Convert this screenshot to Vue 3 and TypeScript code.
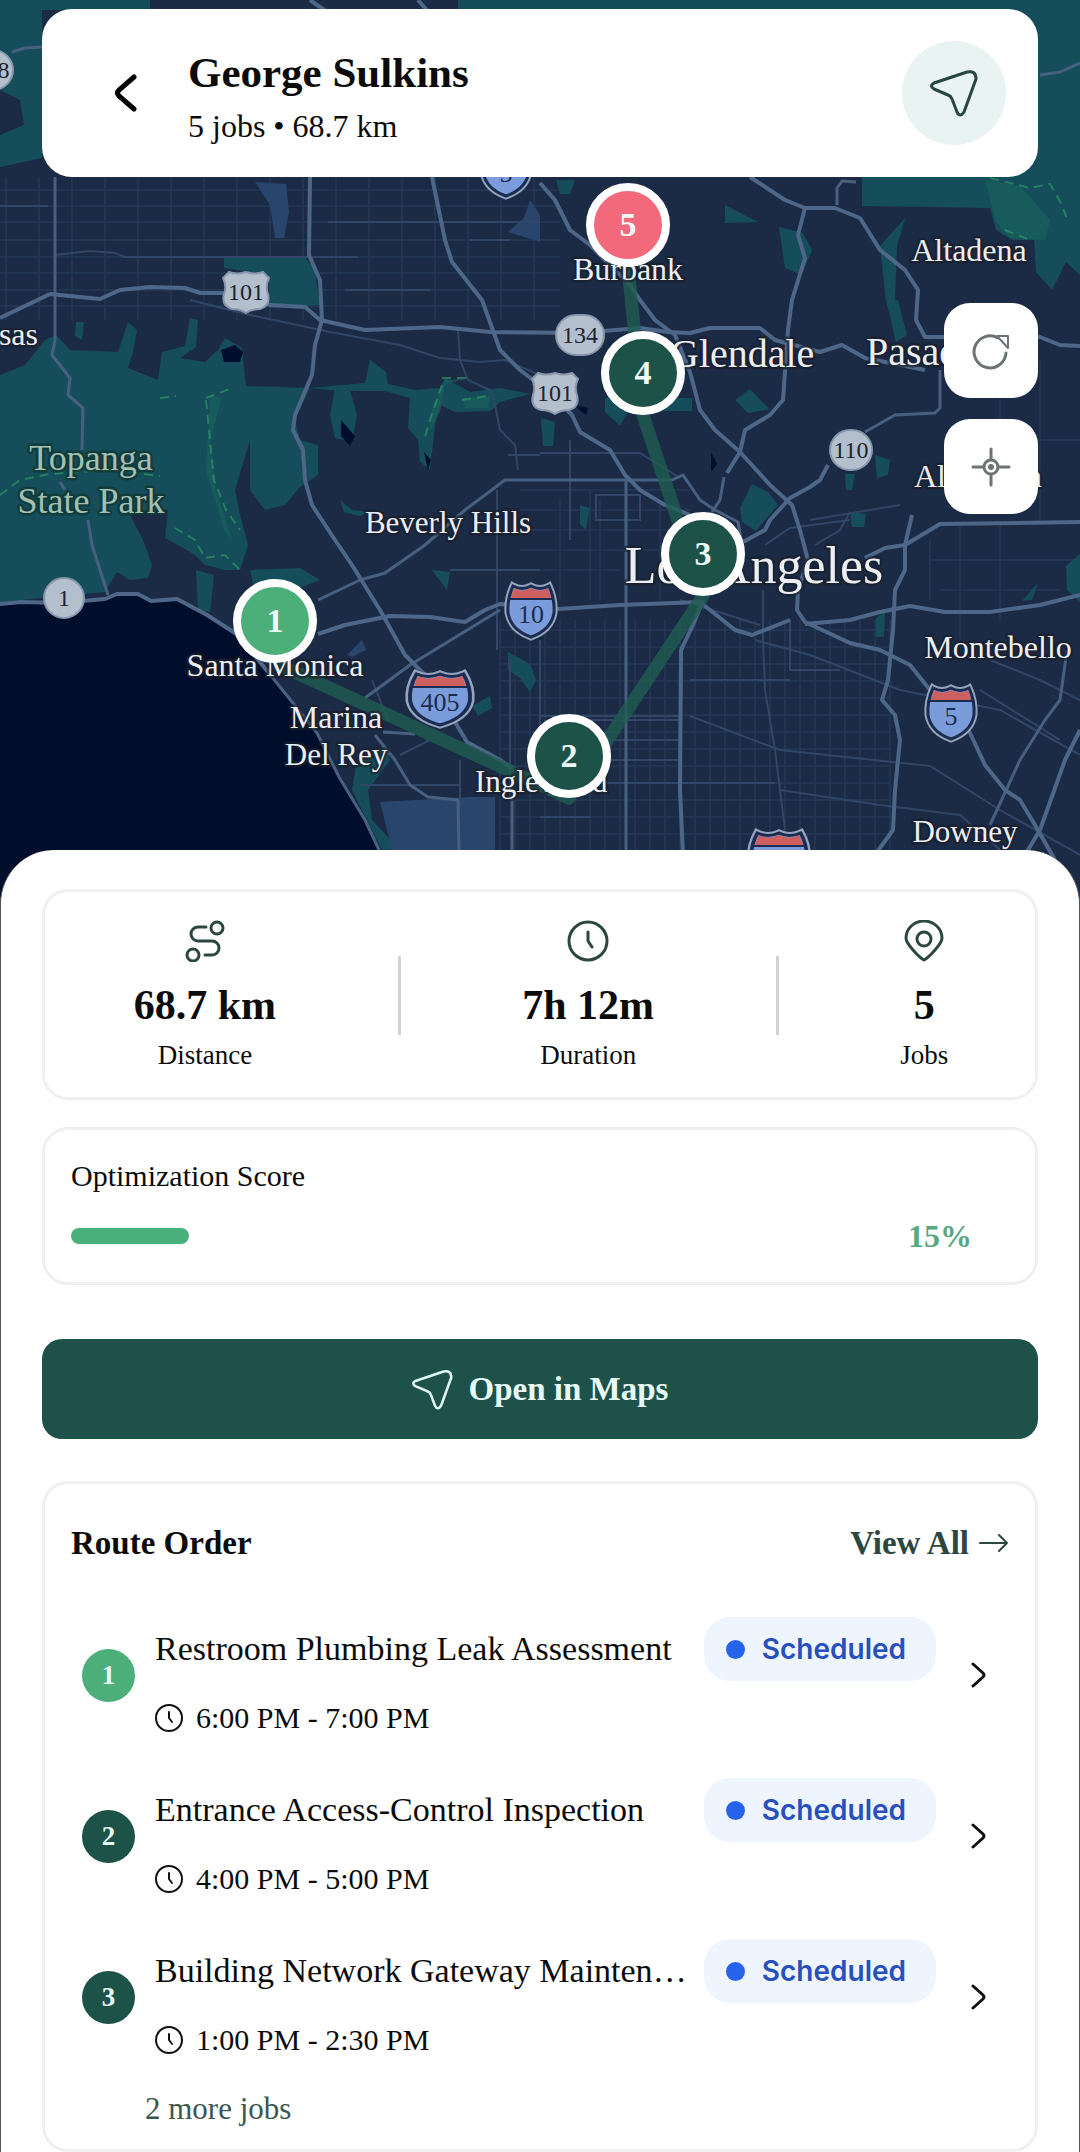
<script setup lang="ts">
import { ref } from 'vue'

interface Stop {
  order: number
  x: number
  y: number
  tone: 'start' | 'mid' | 'end'
}

interface Job {
  order: number
  title: string
  time: string
  status: string
  tone: 'start' | 'mid'
}

interface Label {
  text: string
  x: number
  y: number
  size: number
  anchor?: 'start' | 'middle' | 'end'
  park?: boolean
}

interface Interstate {
  text: string
  x: number
  y: number
  stretch: number
}

const MAP_W = 1080
const MAP_H = 920
const PIN_RADIUS = 42

const stops: Stop[] = [
  { order: 1, x: 275, y: 621, tone: 'start' },
  { order: 2, x: 569, y: 756, tone: 'mid' },
  { order: 3, x: 703, y: 554, tone: 'mid' },
  { order: 4, x: 643, y: 373, tone: 'mid' },
  { order: 5, x: 628, y: 225, tone: 'end' },
]

const jobs = ref<Job[]>([
  { order: 1, title: 'Restroom Plumbing Leak Assessment', time: '6:00 PM - 7:00 PM', status: 'Scheduled', tone: 'start' },
  { order: 2, title: 'Entrance Access-Control Inspection', time: '4:00 PM - 5:00 PM', status: 'Scheduled', tone: 'mid' },
  { order: 3, title: 'Building Network Gateway Maintenance', time: '1:00 PM - 2:30 PM', status: 'Scheduled', tone: 'mid' },
])

const score = 15

const labels: Label[] = [
  { text: 'Burbank', x: 628, y: 280, size: 32, anchor: 'middle' },
  { text: 'Altadena', x: 969, y: 261, size: 32, anchor: 'middle' },
  { text: 'Calabasas', x: 38, y: 345, size: 32, anchor: 'end' },
  { text: 'Glendale', x: 670, y: 367, size: 40 },
  { text: 'Pasadena', x: 866, y: 365, size: 40 },
  { text: 'Alhambra', x: 914, y: 487, size: 32 },
  { text: 'Beverly Hills', x: 448, y: 533, size: 31, anchor: 'middle' },
  { text: 'Los Angeles', x: 754, y: 583, size: 52, anchor: 'middle' },
  { text: 'Santa Monica', x: 275, y: 676, size: 32, anchor: 'middle' },
  { text: 'Marina', x: 336, y: 728, size: 32, anchor: 'middle' },
  { text: 'Del Rey', x: 336, y: 765, size: 31, anchor: 'middle' },
  { text: 'Inglewood', x: 475, y: 792, size: 31 },
  { text: 'Montebello', x: 998, y: 658, size: 32, anchor: 'middle' },
  { text: 'Downey', x: 965, y: 842, size: 31, anchor: 'middle' },
  { text: 'Topanga', x: 91, y: 470, size: 36, anchor: 'middle', park: true },
  { text: 'State Park', x: 91, y: 513, size: 36, anchor: 'middle', park: true },
]

const interstates: Interstate[] = [
  { text: '5', x: 506, y: 170, stretch: 1 },
  { text: '10', x: 531, y: 611, stretch: 1 },
  { text: '405', x: 440, y: 699, stretch: 1.3 },
  { text: '5', x: 951, y: 713, stretch: 1 },
  { text: '710', x: 779, y: 858, stretch: 1.2 },
]

const usRoutes = [
  { x: 246, y: 292 },
  { x: 555, y: 393 },
]

const stateRoutes = [
  { text: '118', x: -8, y: 70, rx: 21 },
  { text: '134', x: 580, y: 335, rx: 24 },
  { text: '110', x: 851, y: 450, rx: 21 },
  { text: '1', x: 64, y: 598, rx: 20 },
]

const greens: string[] = [
  'M0 375L25 365L45 340L56 335L70 350L118 352L128 322L137 330L133 352L128 368L158 380L162 352L185 346L190 318L198 320L196 347L180 358L205 362L218 350L225 338L242 348L246 386L310 388L295 420L300 440L318 445L318 475L300 487L285 505L265 510L250 490L250 440L235 490L240 515L248 545L240 570L225 570L205 565L195 555L178 545L165 538L168 510L150 512L130 515L143 540L152 565L148 578L130 580L117 572L105 592L0 602Z',
  'M224 257H305L315 270L320 305L270 308L268 275L224 268Z',
  'M0 0H150V10H42V158L0 167V135L24 125L20 100L0 90Z',
  'M1020 0H1080V275L1066 262L1052 290L1036 272L1034 240L1012 240L996 230L990 208L862 206V170H1020Z',
  'M458 0H1080V12H458Z',
  'M310 388L365 383L370 360L386 372L388 384L415 390L440 388L445 378L470 392L500 388L530 394L500 402L490 411L455 412L440 405L435 425L430 470L420 462L418 440L408 428L410 398L385 391L340 391Z',
  'M335 388L350 390L357 415L352 442L335 438L330 415Z',
  'M76 322H84L82 340L75 336Z',
  'M605 398H692V411H628L620 426L605 412Z',
  'M735 400L750 389L762 402L770 409L748 413Z',
  'M541 418L555 422L553 446L543 446Z',
  'M740 508L752 484L768 492L778 505L765 520L756 531L742 522Z',
  'M875 455L890 460L888 475L877 478Z',
  'M845 474H855L852 490H846Z',
  'M850 512L866 514L864 527L852 527Z',
  'M886 300H898L907 335L896 342Z',
  'M725 205L758 222L725 223Z',
  'M779 227L803 233L812 250L802 275L785 268Z',
  'M880 246L905 218L897 246L895 300H886Z',
  'M876 618L885 612L884 637L876 637Z',
  'M1022 601L1038 583L1032 600Z',
  'M1066 566L1080 554V602L1067 590Z',
  'M508 652L530 664L536 680L530 692L520 678L508 670Z',
  'M472 706L490 696L492 708L478 716Z',
  'M556 180H575L570 194H560Z',
  'M580 505L590 508L586 530L580 524Z',
  'M250 570L300 568L320 580L290 592H255Z',
  'M432 570L450 572L447 590Z',
  'M340 500L352 510L370 512L360 516L344 512Z',
  'M356 765L385 745L390 760L368 790L372 820L400 850H382L352 790Z',
  'M196 570L214 575L210 612L198 610Z',
]

const deepGreens: string[] = [
  'M985 180L1020 186L1050 220L1045 240L1010 238L996 222Z',
  'M210 395L222 398L210 440L216 490L232 540L224 530L206 470Z',
  'M445 380L466 379L445 384L440 412L430 430L432 410Z',
  'M462 398L490 396L488 408L465 408Z',
]

const developed: string[] = [
  'M380 802L470 797H495V850H392Z',
  'M255 182L286 184L289 212L284 238H275L270 205Z',
  'M508 232L524 218L530 200L540 215V242Z',
  'M347 655L362 640L366 650L352 657Z',
]

const lakes: string[] = [
  'M221 350L235 345L243 352L240 362L224 362Z',
  'M341 420L355 436L350 446L341 436Z',
  'M424 452L431 460L428 470Z',
  'M711 452L717 464L711 472Z',
  'M574 405L588 408L586 415Z',
]

const highways: string[] = [
  'M0 318L50 294L100 299L120 290L150 287L185 288L200 293H240L270 305L305 307L320 320L365 330L440 327L490 332L580 333L640 328L668 332L690 333L710 328L760 328L775 340L820 352L842 345L865 358L925 370',
  'M310 177L309 255L320 280L322 320L315 345L312 375L295 415L293 430L303 450L305 480L312 505L335 540L352 565L380 610L405 655L430 680L455 722L467 742L500 760L512 768',
  'M432 177L445 240L452 262L482 300L500 350L520 370L550 393L572 415L580 432L610 450L625 475L640 490L665 505L690 515',
  'M540 183L555 200L570 230L590 245L630 285L640 300L655 320L675 335L690 372L700 410L715 430L740 452L770 485L792 505L800 530L808 560L798 590L797 610L805 622L850 643L880 650L910 665L930 690L970 733L985 765L1005 790L1020 800L1035 825L1055 860',
  'M750 177L785 200L805 208H835L860 218L880 250L905 270L918 290L916 320L925 337H1040L1060 345L1080 346',
  'M805 208L798 235L805 258L792 300L788 330L783 400L770 415L745 430L740 452L727 473',
  'M828 465L820 480L810 487L790 498L770 520L765 530L745 541L700 545',
  'M318 634L345 625L390 616L430 617L465 622L485 610L500 604L558 609L620 605L700 602L735 630L752 635L790 620',
  'M805 624L850 620L880 612L910 606L945 612L990 612L1040 605L1080 595',
  'M865 558L885 548L905 545L940 524L1080 522',
  'M912 515L905 545V570L895 590L893 630L888 680L882 700L895 715L900 740L895 790L893 830L877 852',
  'M703 600L693 625L681 650L680 790L683 855',
  'M1080 730L1065 760L1040 830L1025 855',
  'M0 604L21 602L60 603L105 599L117 594L138 594L151 601L177 599L207 615L238 635L272 677',
  'M310 0L330 14M418 0L430 14',
]

const streets: string[] = [
  'M318 600L360 580L385 573L425 545L465 510L505 480H620L672 480L683 475L700 500L715 510L738 522L742 545',
  'M626 480V850',
  'M55 177V340L52 355L70 378L68 395L83 408L82 450M60 482L65 490M88 520L92 545L108 595',
  'M383 732L415 734M375 735L395 760L410 785L428 797L458 800L459 852M512 795V852',
  'M365 698L410 665L500 610',
  'M865 432L895 415L935 413L940 408V370',
  'M1067 650L1060 700L1045 720L1020 760L990 825',
  'M724 477L720 500L712 512',
  'M12 52L25 48L42 47M1040 75L1060 72L1080 63',
  'M837 205V188L842 181L856 182',
  'M272 677L317 733L339 777L365 820L380 852',
]

const lanes: string[] = [
  'M55 255L90 251L115 253L125 257H358M0 206H48M328 222H540M345 290H430M470 240H510',
  'M190 300L250 315L330 332L400 345L440 358L480 362L505 360L540 375',
  'M458 330L460 360L468 380L490 390L495 405L500 430L515 445L518 470',
  'M540 453H640L680 478M570 440V540M596 495H640V520H596Z',
  'M763 590V640L765 690L775 750L785 830',
  'M755 640L810 655L900 690L1000 710L1080 755',
  'M540 716H680M690 716L780 750L930 766L1000 810L1080 855',
  'M540 783H775M540 817H590M780 790L880 805L960 815L1000 850',
  'M690 680H790M790 620V670H840M680 600L760 625',
  'M388 720L372 680M400 755L430 740M360 785H460M460 760V800M510 660V800M497 650V600M540 640V780',
  'M765 545L790 528L850 520M815 545L840 530L850 512M900 505L810 520',
  'M990 660L1040 680L1080 700M980 690L1060 740',
  'M497 490V600M450 570H540M508 455H540',
  'M560 720H680M560 740H680M560 760H680',
]

const valleyColumns: number[] = Array.from({ length: 17 }, (_, i) => 6 + i * 33)
const valleyRows: number[] = [190, 206, 222, 240, 257, 273, 290, 306]
const southColumns: number[] = Array.from({ length: 27 }, (_, i) => 500 + i * 15)
const southRows: number[] = Array.from({ length: 14 }, (_, i) => 630 + i * 17)

const routeLine = stops.map((s) => `${s.x},${s.y + PIN_RADIUS}`).join(' ')

const interstateShape =
  'M-18 -25Q-9 -20 0 -25Q9 -20 18 -25Q24 -12 23 2Q20 19 0 26Q-20 19 -23 2Q-24 -12 -18 -25Z'

function pinPosition(stop: Stop) {
  return { left: `${(stop.x / MAP_W) * 100}%`, top: `${(stop.y / MAP_H) * 100}%` }
}
</script>

<template>
  <div class="screen">
    <section class="map" aria-label="Route map">
      <svg class="map-canvas" :viewBox="`0 0 ${MAP_W} ${MAP_H}`" aria-hidden="true">
        <rect :width="MAP_W" :height="MAP_H" fill="#1b2b46" />
        <g stroke="#243855" stroke-width="1.5">
          <line v-for="x in valleyColumns" :key="'vc' + x" :x1="x" y1="177" :x2="x" y2="320" />
          <line v-for="y in valleyRows" :key="'vr' + y" x1="0" :y1="y" x2="560" :y2="y" />
          <line v-for="x in southColumns" :key="'sc' + x" :x1="x" y1="620" :x2="x" y2="860" />
          <line v-for="y in southRows" :key="'sr' + y" x1="500" :y1="y" x2="890" :y2="y" />
          <path d="M520 490H690M520 510H690M520 530H670M520 550H670M520 570H620M560 500V600M590 490V600M600 500V600M660 500V600M930 540V600M960 525V640M1000 525V620M930 560H1080M940 590H1060M1000 380V440M1040 360V520M960 440H1080" fill="none" />
        </g>
        <path v-for="(d, i) in greens" :key="'g' + i" :d="d" fill="#154e5a" />
        <path v-for="(d, i) in deepGreens" :key="'d' + i" :d="d" fill="#1a645f" opacity="0.6" />
        <path v-for="(d, i) in developed" :key="'b' + i" :d="d" fill="#2a456c" />
        <path v-for="(d, i) in lakes" :key="'l' + i" :d="d" fill="#000e2b" />
        <path
          d="M0 604L21 602L60 603L105 599L117 594L138 594L151 601L177 599L207 615L238 635L272 677L317 733L339 777L365 820L380 850L400 920H0Z"
          fill="#000e2b"
        />
        <g fill="none" stroke="#2f9367" stroke-width="2" stroke-dasharray="9 6" opacity="0.7">
          <path d="M0 495L20 480L50 474L110 470L160 476" />
          <path d="M206 398L232 388M206 400L210 440L214 480L226 510L240 530" />
          <path d="M175 528L195 540L205 558L225 555L240 570M160 398L176 396" />
          <path d="M442 378H466M442 385L430 420L424 440M462 400L488 396" />
          <path d="M990 178L1030 188L1050 184L1062 205L1068 222M1005 230L1030 240" />
        </g>
        <path v-for="(d, i) in lanes" :key="'n' + i" :d="d" fill="none" stroke="#314666" stroke-width="2" />
        <path v-for="(d, i) in streets" :key="'s' + i" :d="d" fill="none" stroke="#486080" stroke-width="3" stroke-linejoin="round" />
        <path v-for="(d, i) in highways" :key="'h' + i" :d="d" fill="none" stroke="#4e6788" stroke-width="4" stroke-linejoin="round" />

        <polyline :points="routeLine" fill="none" stroke="#1f5c50" stroke-width="13" stroke-linejoin="round" opacity="0.8" />

        <g v-for="(s, i) in interstates" :key="'i' + i" :transform="`translate(${s.x} ${s.y})`">
          <g :transform="`scale(${s.stretch} 1)`">
            <path :d="interstateShape" fill="none" stroke="#93a5be" stroke-width="7" />
            <path :d="interstateShape" fill="#7b9cda" stroke="#1b2c50" stroke-width="3" />
            <path d="M-17 -23Q-9 -18 0 -23Q9 -18 17 -23L20 -13H-20Z" fill="#cd5f5f" />
            <path d="M-22 -12H22" stroke="#1b2c50" stroke-width="2" />
          </g>
          <text class="shield-text" y="12" font-size="26" fill="#1b2c50">{{ s.text }}</text>
        </g>
        <g v-for="(s, i) in usRoutes" :key="'u' + i" :transform="`translate(${s.x} ${s.y})`">
          <path
            d="M-17 -20Q-9 -17 0 -20Q9 -17 17 -20L23 -14Q19 -6 22 2Q25 14 14 17Q6 17 0 21Q-6 17 -14 17Q-25 14 -22 2Q-19 -6 -23 -14Z"
            fill="#b4bfcd" stroke="#8796ab" stroke-width="2"
          />
          <text class="shield-text" y="8" font-size="24" fill="#1d2430">101</text>
        </g>
        <g v-for="(s, i) in stateRoutes" :key="'t' + i" :transform="`translate(${s.x} ${s.y})`">
          <rect :x="-s.rx" y="-20" :width="s.rx * 2" height="40" rx="20" fill="#b4bfcd" stroke="#8796ab" stroke-width="2" />
          <text class="shield-text" y="8" font-size="24" fill="#1d2430">{{ s.text }}</text>
        </g>

        <text
          v-for="l in labels"
          :key="l.text"
          class="place"
          :class="{ park: l.park }"
          :x="l.x"
          :y="l.y"
          :font-size="l.size"
          :text-anchor="l.anchor ?? 'start'"
        >{{ l.text }}</text>
      </svg>

      <button
        v-for="stop in stops"
        :key="stop.order"
        type="button"
        class="pin"
        :class="stop.tone"
        :style="pinPosition(stop)"
      >{{ stop.order }}</button>

      <header class="topbar">
        <button type="button" class="back" aria-label="Back">
          <svg width="24" height="40" viewBox="0 0 24 40">
            <path d="M20 4L5 17Q2 20 5 23L20 36" fill="none" stroke="#000" stroke-width="5" stroke-linecap="round" />
          </svg>
        </button>
        <div class="driver">
          <h1>George Sulkins</h1>
          <p>5 jobs • 68.7 km</p>
        </div>
        <button type="button" class="navigate" aria-label="Start navigation">
          <svg width="48" height="48" viewBox="0 0 48 48">
            <path d="M4 14L37 3Q46 1 46 10L34 43Q30 49 27 43L22 30Q21 27 18 26L4 20Q-1 17 4 14Z" fill="none" stroke="#28463f" stroke-width="3" stroke-linejoin="round" />
          </svg>
        </button>
      </header>

      <div class="controls">
        <button type="button" class="control" aria-label="Refresh route">
          <svg width="40" height="40" viewBox="0 0 40 40" fill="none" stroke="#6c7374" stroke-width="3">
            <path d="M35 22A16 16 0 1 1 27 7" stroke-linecap="round" />
            <path d="M26 5H37V17Z" stroke-width="2" stroke-linejoin="round" />
          </svg>
        </button>
        <button type="button" class="control" aria-label="Centre the map">
          <svg width="40" height="40" viewBox="0 0 40 40" fill="none" stroke="#6c7374" stroke-width="3" stroke-linecap="round">
            <circle cx="20" cy="20" r="7" />
            <circle cx="20" cy="20" r="3" fill="#6c7374" stroke="none" />
            <path d="M20 2V12M20 28V38M2 20H12M28 20H38" />
          </svg>
        </button>
      </div>
    </section>

    <main class="sheet">
      <section class="card stats">
        <div class="stat">
          <svg width="42" height="42" viewBox="0 0 42 42" fill="none" stroke="#2c4740" stroke-width="3" stroke-linecap="round">
            <ellipse cx="33" cy="8" rx="6" ry="6" />
            <ellipse cx="9" cy="35" rx="6" ry="6" />
            <path d="M22 7H14A7 7 0 0 0 14 21H28A7 7 0 0 1 28 35H21" />
          </svg>
          <strong>68.7 km</strong>
          <span>Distance</span>
        </div>
        <i class="rule"></i>
        <div class="stat">
          <svg width="42" height="42" viewBox="0 0 42 42" fill="none" stroke="#2c4740" stroke-width="3" stroke-linecap="round" stroke-linejoin="round">
            <circle cx="21" cy="21" r="19" />
            <path d="M21 12V21L25 27" />
          </svg>
          <strong>7h 12m</strong>
          <span>Duration</span>
        </div>
        <i class="rule"></i>
        <div class="stat">
          <svg width="42" height="42" viewBox="0 0 42 42" fill="none" stroke="#2c4740" stroke-width="3" stroke-linejoin="round">
            <path d="M21 40Q17 38 10 30Q3 22 3 18A18 17 0 0 1 39 18Q39 22 32 30Q25 38 21 40Z" />
            <circle cx="21" cy="19" r="7" />
          </svg>
          <strong>5</strong>
          <span>Jobs</span>
        </div>
      </section>

      <section class="card score">
        <h2 id="score-title">Optimization Score</h2>
        <div class="score-row">
          <div class="track" role="progressbar" aria-labelledby="score-title" :aria-valuenow="score" aria-valuemin="0" aria-valuemax="100">
            <div class="fill" :style="{ width: score + '%' }"></div>
          </div>
          <span class="percent">{{ score }}%</span>
        </div>
      </section>

      <button type="button" class="open-maps">
        <svg width="41" height="41" viewBox="0 0 48 48">
          <path d="M4 14L37 3Q46 1 46 10L34 43Q30 49 27 43L22 30Q21 27 18 26L4 20Q-1 17 4 14Z" fill="none" stroke="#dff7f2" stroke-width="3" stroke-linejoin="round" />
        </svg>
        Open in Maps
      </button>

      <section class="card route">
        <div class="route-head">
          <h2>Route Order</h2>
          <a href="#all" class="view-all">
            View All
            <svg width="30" height="20" viewBox="0 0 30 20" fill="none" stroke="#2c4740" stroke-width="2" stroke-linecap="round" stroke-linejoin="round">
              <path d="M1 10H28M20 2L28 10L20 18" />
            </svg>
          </a>
        </div>
        <ol class="jobs">
          <li v-for="job in jobs" :key="job.order" class="job">
            <span class="order" :class="job.tone">{{ job.order }}</span>
            <div class="job-body">
              <div class="job-top">
                <h3>{{ job.title }}</h3>
                <span class="badge"><i></i>{{ job.status }}</span>
              </div>
              <p class="time">
                <svg width="28" height="28" viewBox="0 0 28 28" fill="none" stroke="#111" stroke-width="2" stroke-linecap="round" stroke-linejoin="round">
                  <circle cx="14" cy="14" r="13" />
                  <path d="M14 8V14L17 18" />
                </svg>
                {{ job.time }}
              </p>
            </div>
            <button type="button" class="open-job" :aria-label="'Open ' + job.title">
              <svg width="16" height="26" viewBox="0 0 16 26">
                <path d="M2 2L12 11Q14 13 12 15L2 24" fill="none" stroke="#111" stroke-width="3" stroke-linecap="round" />
              </svg>
            </button>
          </li>
        </ol>
        <p class="more">2 more jobs</p>
      </section>
    </main>
  </div>
</template>

<style>
body {
  margin: 0;
  background: #fff;
}
</style>

<style scoped>
.screen {
  font-family: 'Liberation Serif', 'Times New Roman', serif;
  color: #0c0c0c;
  background: #fefefe;
}

h1,
h2,
h3,
p,
ol {
  margin: 0;
  padding: 0;
}

button {
  font: inherit;
  border: 0;
  padding: 0;
  cursor: pointer;
}

svg {
  display: block;
  flex: none;
}

.map {
  position: relative;
  overflow: hidden;
}

.map-canvas {
  width: 100%;
  height: auto;
}

.place {
  fill: #eceef2;
  paint-order: stroke;
  stroke: rgba(24, 30, 42, 0.65);
  stroke-width: 5px;
  stroke-linejoin: round;
}

.place.park {
  fill: #a3c0b2;
  stroke: rgba(16, 56, 52, 0.8);
}

.shield-text {
  text-anchor: middle;
}

.pin {
  position: absolute;
  width: 84px;
  height: 84px;
  box-sizing: border-box;
  transform: translate(-50%, -50%);
  border: 8px solid #fff;
  border-radius: 50%;
  color: #eefaf5;
  font-size: 34px;
  font-weight: 700;
}

.start {
  background: #4caf7a;
}

.mid {
  background: #1d5248;
}

.end {
  background: #f2697c;
}

.topbar {
  position: absolute;
  top: 9px;
  left: 42px;
  right: 42px;
  display: flex;
  align-items: center;
  min-height: 168px;
  box-sizing: border-box;
  padding: 0 32px 0 46px;
  background: #fff;
  border-radius: 30px;
}

.back {
  display: grid;
  place-items: center;
  width: 76px;
  height: 76px;
  background: none;
}

.driver {
  flex: 1;
  display: flex;
  flex-direction: column;
  gap: 2px;
  padding: 4px 0 0 24px;
}

.driver h1 {
  font-size: 43px;
  line-height: 60px;
}

.driver p {
  font-size: 32px;
  line-height: 42px;
}

.navigate {
  display: grid;
  place-items: center;
  width: 104px;
  height: 104px;
  border-radius: 50%;
  background: #e8f3f2;
}

.controls {
  position: absolute;
  top: 303px;
  right: 42px;
  display: flex;
  flex-direction: column;
  gap: 21px;
}

.control {
  display: grid;
  place-items: center;
  width: 94px;
  height: 95px;
  border-radius: 26px;
  background: #fff;
}

.sheet {
  position: relative;
  margin-top: -70px;
  padding: 39px 41px 0;
  border: solid #55585c;
  border-width: 0 1px;
  border-radius: 54px 54px 0 0;
  background: #fefefe;
}

.card {
  border: 3px solid #f1f0f0;
  border-radius: 26px;
  background: #fff;
}

.stats {
  display: flex;
  align-items: center;
  justify-content: space-around;
  padding: 28px 26px 26px 28px;
}

.stat {
  display: flex;
  flex-direction: column;
  align-items: center;
}

.stat strong {
  margin-top: 19px;
  font-size: 42px;
  line-height: 48px;
}

.stat span {
  margin-top: 10px;
  font-size: 27px;
  line-height: 32px;
}

.rule {
  width: 3px;
  height: 79px;
  background: #d2d2d2;
}

.score {
  margin-top: 27px;
  padding: 29px 26px 28px;
}

.score h2 {
  font-size: 30px;
  font-weight: 400;
  line-height: 34px;
}

.score-row {
  display: flex;
  align-items: center;
  gap: 14px;
  margin-top: 25px;
}

.track {
  flex: 1;
  height: 16px;
  border-radius: 8px;
}

.fill {
  height: 100%;
  border-radius: 8px;
  background: #49b07c;
}

.percent {
  width: 138px;
  text-align: center;
  font-size: 32px;
  font-weight: 700;
  line-height: 36px;
  color: #58a884;
}

.open-maps {
  display: flex;
  align-items: center;
  justify-content: center;
  gap: 16px;
  width: 100%;
  height: 100px;
  margin-top: 54px;
  border-radius: 20px;
  background: #1e5149;
  color: #e6faf6;
  font-size: 33px;
  font-weight: 700;
}

.route {
  margin-top: 42px;
  padding: 39px 26px 23px;
}

.route-head {
  display: flex;
  align-items: center;
  justify-content: space-between;
  margin-bottom: 32px;
}

.route-head h2,
.view-all {
  font-size: 33px;
  font-weight: 700;
  line-height: 40px;
}

.view-all {
  display: flex;
  align-items: center;
  gap: 10px;
  color: #2c4740;
  text-decoration: none;
}

.jobs {
  list-style: none;
}

.job {
  display: flex;
  align-items: center;
  padding: 20px 22px 21px 11px;
}

.order {
  display: grid;
  place-items: center;
  flex: none;
  width: 53px;
  height: 53px;
  border-radius: 50%;
  color: #e6faf6;
  font-size: 27px;
  font-weight: 700;
}

.job-body {
  flex: 1;
  min-width: 0;
  margin-left: 20px;
}

.job-top {
  display: flex;
  align-items: center;
  gap: 10px;
  height: 68px;
}

.job-top h3 {
  flex: 1;
  min-width: 0;
  overflow: hidden;
  text-overflow: ellipsis;
  white-space: nowrap;
  font-size: 34px;
  font-weight: 400;
  line-height: 40px;
}

.badge {
  display: flex;
  align-items: center;
  gap: 17px;
  height: 64px;
  padding: 0 30px 0 22px;
  border-radius: 26px;
  background: #eff5fe;
  color: #2850bd;
  font-family: Inter, sans-serif;
  font-size: 28px;
  font-weight: 600;
}

.badge i {
  width: 19px;
  height: 19px;
  border-radius: 50%;
  background: #2563eb;
}

.time {
  display: flex;
  align-items: center;
  gap: 13px;
  margin-top: 18px;
  font-size: 30px;
  line-height: 34px;
}

.open-job {
  margin-left: 35px;
  background: none;
}

.more {
  margin-top: 14px;
  padding-left: 74px;
  font-size: 31px;
  line-height: 34px;
  color: #3b574f;
}
</style>
